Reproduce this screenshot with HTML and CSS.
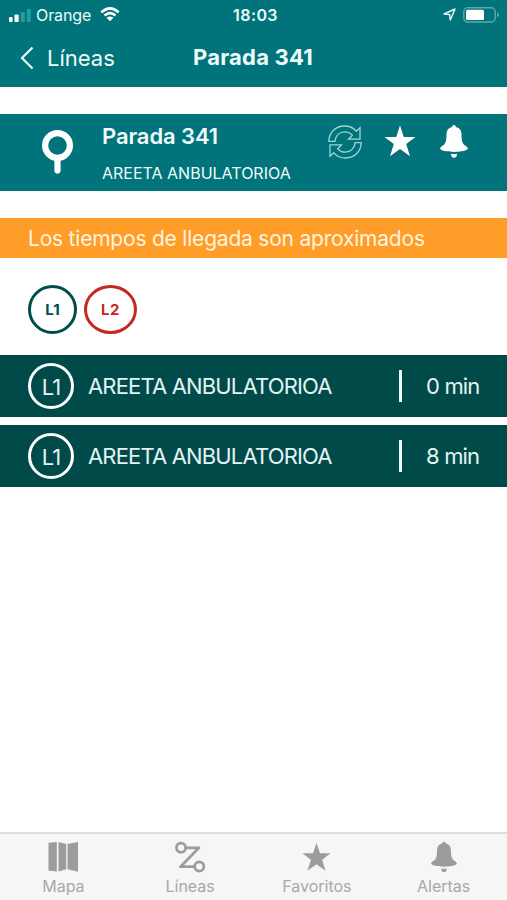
FILE: index.html
```html
<!DOCTYPE html>
<html lang="es">
<head>
  <meta charset="UTF-8" />
  <meta name="viewport" content="width=device-width, initial-scale=1.0"/>
  <title>Parada 341</title>
  <link rel="stylesheet" href="styles.css">
</head>
<body>
  <svg class="hidden">
    <symbol id="star" viewBox="0 0 32 32">
      <path d="M16 .5 L19.8 11.9 H31.5 L22.2 19.1 L26 31.2 L16 24.1 L6 31.2 L9.8 19.1 L.5 11.9 H12.2 Z"/>
    </symbol>
    <symbol id="bell" viewBox="0 0 28 33">
      <path d="M14 0 C15.2 0 15.8 .7 15.9 2 C19.8 2.8 21.4 5.5 21.5 9.5 C21.6 14 21.8 17.5 23.8 19.5 C25.5 21 27.5 21.8 27.9 23.5 C28.2 25.5 21 27 14 27 C7 27 -.2 25.5 .1 23.5 C.5 21.8 2.5 21 4.2 19.5 C6.2 17.5 6.4 14 6.5 9.5 C6.6 5.5 8.2 2.8 12.1 2 C12.2 .7 12.8 0 14 0 Z"/>
      <path d="M11 28.8 Q14 29.3 17 28.8 Q17 32.7 14 32.7 Q11 32.7 11 28.8 Z"/>
    </symbol>
  </svg>

  <div class="app">
    <header>
      <div class="status-bar">
        <div class="status-left">
          <svg class="signal" width="23" height="13" viewBox="0 0 23 13">
            <rect x="1" y="8" width="3.6" height="5" rx="1"/>
            <rect x="6.5" y="5.5" width="4.2" height="7.5" rx="1"/>
            <rect class="off" x="12.8" y="3" width="4" height="10" rx="1"/>
            <rect class="off" x="18.8" y="0" width="4" height="13" rx="1"/>
          </svg>
          <span class="carrier">Orange</span>
          <svg class="wifi" width="20" height="15" viewBox="0 0 20 15">
            <path d="M1.3 5.4 Q10 -2.5 18.7 5.4 M4.5 8.6 Q10 3.8 15.5 8.6"/>
            <path class="dot" d="M6.6 10.8 Q10 8 13.4 10.8 L10 14.3 Z"/>
          </svg>
        </div>
        <span class="clock">18:03</span>
        <div class="status-right">
          <svg class="location" width="13" height="13" viewBox="0 0 13 13">
            <path d="M1 6 L12 1 L7.3 12 L6.6 6.6 Z"/>
          </svg>
          <svg width="37" height="16" viewBox="0 0 37 16">
            <rect class="battery" x=".8" y=".8" width="31.4" height="14.2" rx="4"/>
            <rect class="charge" x="3" y="2.8" width="18" height="10.3" rx="1.5"/>
            <path class="cap" d="M34 5.5 Q36 6.5 36 8 Q36 9.5 34 10.5 Z"/>
          </svg>
        </div>
      </div>
      <nav class="nav-bar">
        <a class="back">
          <svg width="14" height="24" viewBox="0 0 14 24"><path d="M12.5 1.5 L2 12 L12.5 22.5"/></svg>
          <span>Líneas</span>
        </a>
        <h1>Parada 341</h1>
      </nav>
    </header>

    <section class="stop">
      <svg class="pin" width="32" height="44" viewBox="0 0 32 44">
        <circle cx="15.5" cy="15.5" r="12.4"/>
        <path d="M15.5 29 V40.5"/>
      </svg>
      <div class="stop-info">
        <h2>Parada 341</h2>
        <p>AREETA ANBULATORIOA</p>
      </div>
      <div class="actions">
        <svg class="refresh" width="34" height="34" viewBox="0 0 34 34">
          <path id="arrow" d="M.8 16.3 C1 7 8 1 16.5 1 C21.5 1 25.5 3 28.2 6.2 L32 2.8 V14.2 H20.5 L24.3 10.3 C22.4 8.2 20 6.9 16.8 6.9 C11.5 6.9 7.6 10.6 6.8 16.3 Z"/>
          <use href="#arrow" transform="rotate(180 17 17)"/>
        </svg>
        <svg width="32" height="32"><use href="#star"/></svg>
        <svg width="28" height="33"><use href="#bell"/></svg>
      </div>
    </section>

    <div class="notice">Los tiempos de llegada son aproximados</div>

    <div class="lines">
      <span class="line line-1">L1</span>
      <span class="line line-2">L2</span>
    </div>

    <div class="arrivals">
      <div class="arrival">
        <span class="badge">L1</span>
        <span class="dest">AREETA ANBULATORIOA</span>
        <span class="time">0 min</span>
      </div>
      <div class="arrival">
        <span class="badge">L1</span>
        <span class="dest">AREETA ANBULATORIOA</span>
        <span class="time">8 min</span>
      </div>
    </div>

    <footer class="tab-bar">
      <a class="tab">
        <svg width="32" height="32" viewBox="0 0 32 32">
          <path d="M1.5 1.8 L9.8 1 V30.5 L1.5 29.5 Z M11.5 1 L19.2 3 V28.3 L11.5 30.5 Z M20.5 3 L31 1 V30.8 L20.5 28.3 Z"/>
        </svg>
        <span>Mapa</span>
      </a>
      <a class="tab">
        <svg class="route" width="32" height="32" viewBox="0 0 32 32">
          <circle cx="7" cy="6.8" r="4.6"/>
          <path d="M11.8 6.8 H25 L6.5 25.7 H20.5"/>
          <circle cx="25.3" cy="25.5" r="4.6"/>
        </svg>
        <span>Líneas</span>
      </a>
      <a class="tab">
        <svg class="tab-star" width="29" height="32"><use href="#star"/></svg>
        <span>Favoritos</span>
      </a>
      <a class="tab">
        <svg class="tab-bell" width="26" height="32"><use href="#bell"/></svg>
        <span>Alertas</span>
      </a>
    </footer>
  </div>
</body>
</html>
```

FILE: styles.css
```css
* {
  box-sizing: border-box;
}

body {
  margin: 0;
  font-family: Inter, "Liberation Sans", sans-serif;
  background: #fff;
  color: #effbfb;
}

h1, h2, p {
  margin: 0;
}

svg {
  display: block;
  flex: none;
  fill: #fff;
}

.hidden {
  display: none;
}

.app {
  display: flex;
  flex-direction: column;
  height: 900px;
}

header {
  height: 87px;
  background: #00747a;
}

.status-bar {
  display: grid;
  grid-template-columns: 1fr auto 1fr;
  align-items: center;
  height: 28px;
  padding: 1px 7px 0 8px;
}

.status-left, .status-right {
  display: flex;
  align-items: center;
}

.signal {
  margin-top: 1px;
}

.signal .off {
  fill: #259c9b;
}

.carrier {
  margin: 0 9px 0 5px;
  font-size: 16px;
  letter-spacing: -0.1px;
}

.wifi {
  fill: none;
  stroke: #fff;
  stroke-width: 2.6;
}

.wifi .dot {
  fill: #fff;
  stroke: none;
}

.clock {
  padding-left: 3px;
  font-size: 16px;
  font-weight: 600;
  letter-spacing: 0.4px;
}

.status-right {
  justify-content: flex-end;
  gap: 7px;
}

.location {
  fill: none;
  stroke: #dff5f5;
  stroke-width: 1.5;
  stroke-linejoin: round;
}

.battery {
  fill: none;
  stroke: #5aa9ad;
  stroke-width: 1.4;
}

.cap {
  fill: #5aa9ad;
}

.nav-bar {
  display: grid;
  grid-template-columns: 1fr auto 1fr;
  align-items: center;
  height: 59px;
  padding-right: 1px;
}

.back {
  display: flex;
  align-items: center;
  gap: 13px;
  padding-left: 20px;
  font-size: 22px;
}

.back svg {
  fill: none;
  stroke: #e8fafa;
  stroke-width: 2.2;
}

h1 {
  margin-top: -2px;
  font-size: 22px;
  font-weight: 700;
  letter-spacing: 0.2px;
}

.stop {
  display: flex;
  height: 77px;
  margin-top: 27px;
  padding: 0 39px 0 42px;
  background: #00747a;
}

.pin {
  margin-top: 16px;
  fill: none;
  stroke: #fff;
  stroke-width: 6.2;
  stroke-linecap: round;
}

.stop-info {
  flex: 1;
  padding: 9px 0 0 28px;
  white-space: nowrap;
}

h2 {
  font-size: 22px;
  font-weight: 600;
  line-height: 27px;
  letter-spacing: -0.1px;
}

.stop-info p {
  margin-top: 13px;
  font-size: 16px;
  line-height: 20px;
}

.actions {
  display: flex;
  gap: 22px;
  padding-top: 11px;
}

.actions svg:last-child {
  margin-left: 2px;
}

.refresh {
  fill: none;
  stroke: #9ed5d8;
  stroke-width: 1.3;
}

.notice {
  height: 40px;
  margin-top: 27px;
  padding-left: 28px;
  background: #ff9d28;
  color: #fff4df;
  font-size: 21px;
  line-height: 42px;
  letter-spacing: -0.21px;
  white-space: nowrap;
}

.lines {
  display: flex;
  gap: 7px;
  padding: 27px 28px 21px;
}

.line {
  width: 49px;
  height: 49px;
  border: 3px solid;
  border-radius: 50%;
  font-size: 15px;
  font-weight: 700;
  line-height: 44px;
  text-align: center;
}

.line-1 {
  color: #004e4c;
}

.line-2 {
  width: 53px;
  color: #c42820;
  letter-spacing: 0.5px;
}

.arrivals {
  display: flex;
  flex-direction: column;
  gap: 8px;
}

.arrival {
  display: flex;
  align-items: center;
  height: 62px;
  padding: 0 27px 0 28px;
  background: #004b4a;
  color: #e4f3f3;
  font-size: 22px;
  letter-spacing: -0.83px;
  white-space: nowrap;
}

.badge {
  width: 46px;
  height: 46px;
  border: 3px solid #fff;
  border-radius: 50%;
  line-height: 42px;
  text-align: center;
}

.dest {
  flex: 1;
  padding-left: 14px;
}

.time {
  width: 81px;
  padding-left: 24px;
  border-left: 3px solid #effafa;
  line-height: 32px;
}

.tab-bar {
  display: grid;
  grid-template-columns: repeat(4, 1fr);
  height: 68px;
  margin-top: auto;
  border-top: 2px solid #dedede;
  background: #f6f6f6;
  color: #a8a8a8;
}

.tab {
  display: flex;
  flex-direction: column;
  align-items: center;
  padding-top: 7px;
  font-size: 16px;
  line-height: 20px;
}

.tab svg {
  fill: #9c9c9c;
}

.tab span {
  margin-top: 3px;
}

.tab .route {
  fill: none;
  stroke: #9c9c9c;
  stroke-width: 2.7;
  stroke-linejoin: round;
}
```
